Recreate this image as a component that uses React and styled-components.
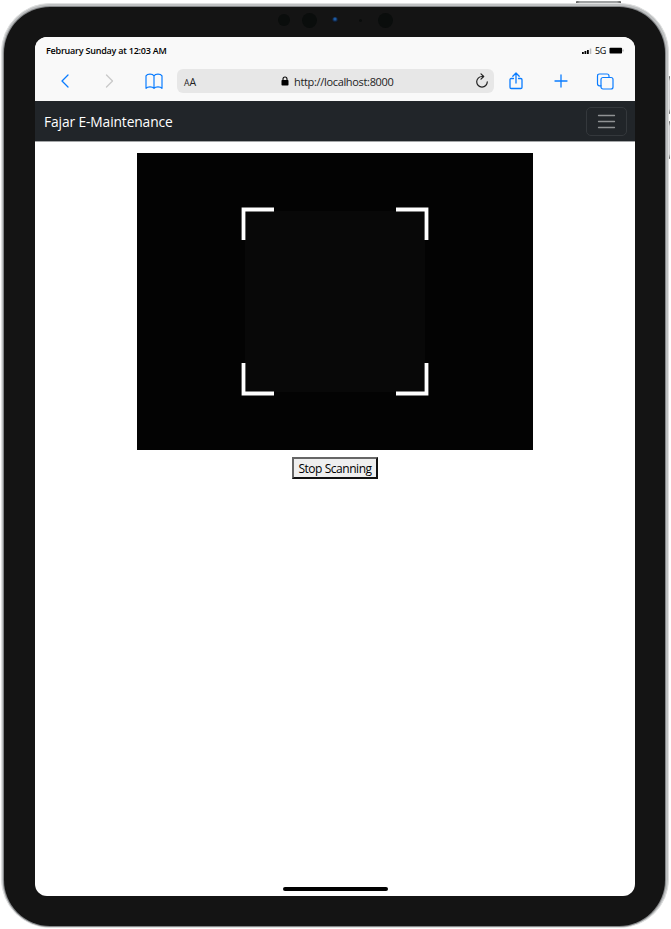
import React from "react";
import styled, { createGlobalStyle } from "styled-components";

const GlobalStyle = createGlobalStyle`
  * { box-sizing: border-box; }
  body { margin: 0; background: #fff; overflow: hidden; font-family: "Open Sans", "Noto Sans", sans-serif; }
`;

const Stage = styled.main`
  position: relative;
  width: 671px;
  height: 929px;
  padding: 3px 2px 1px 1px;
`;

const HardwareButton = styled.span`
  position: absolute;
  left: ${(p) => p.$x}px;
  top: ${(p) => p.$y}px;
  width: ${(p) => p.$w}px;
  height: ${(p) => p.$h}px;
  border-radius: 1px;
  background: ${(p) => (p.$side ? "linear-gradient(#555, #d0d0d2 5px, #d0d0d2 calc(100% - 5px), #555)" : "linear-gradient(90deg, #555, #a0a2a3 4px, #a0a2a3 calc(100% - 4px), #555)")};
`;

const Frame = styled.div`
  position: relative;
  height: 925px;
  padding: 3px 3px 1px 2px;
  border: 1px solid #dfe0e0;
  border-radius: 49px;
  background: #bfc1c2;
`;

const Bezel = styled.div`
  height: 100%;
  padding: 30px 30px 30px 31px;
  border-radius: 46px;
  background: #141414;
  box-shadow: 0 0 0 1px #858789;
`;

const Lens = styled.span`
  position: absolute;
  left: ${(p) => p.$x - p.$size / 2 - 2}px;
  top: ${(p) => 16 - p.$size / 2}px;
  width: ${(p) => p.$size}px;
  height: ${(p) => p.$size}px;
  border-radius: 50%;
  background: ${(p) => p.$color || "#0a0d0c"};
`;

const Screen = styled.div`
  height: 859px;
  display: flex;
  flex-direction: column;
  overflow: hidden;
  border-radius: 12px;
  background: #fff;
`;

const StatusBar = styled.div`
  height: 28px;
  padding: 0 11px;
  display: flex;
  align-items: center;
  justify-content: space-between;
  background: #f9f9f9;
  color: #000;
  font-size: 9px;
`;

const Clock = styled.span`
  margin-top: -1px;
  font-weight: 600;
  letter-spacing: -0.22px;
`;

const Signals = styled.div`
  display: flex;
  align-items: center;
  gap: 3px;
  margin-top: -1px;
  font-weight: 500;
  letter-spacing: -0.3px;
`;

const Toolbar = styled.div`
  height: 36px;
  padding: 4px 0 8px;
  display: grid;
  grid-template-columns: 15px 44px 45px 38px 317px 44px 45px 44px;
  align-items: center;
  background: #f9f9f9;
`;

const IconCell = styled.div`
  grid-column: ${(p) => p.$col};
  display: flex;
  justify-content: ${(p) => p.$align || "center"};
  svg { display: block; }
`;

const AddressBar = styled.div`
  grid-column: 5;
  height: 24px;
  padding: 0 4px 0 7px;
  display: grid;
  grid-template-columns: 97px 1fr 16px;
  align-items: center;
  border-radius: 6px;
  background: #e7e7e7;
  color: #222;
  svg { display: block; }
`;

const ReaderMode = styled.span`
  padding-top: 1px;
  font-size: 10.5px;
  small { font-size: 8.5px; }
`;

const Address = styled.span`
  display: flex;
  align-items: center;
  gap: 5px;
  font-size: 11px;
  letter-spacing: -0.33px;
`;

const Navbar = styled.nav`
  height: 41px;
  padding: 0 8px 0 9px;
  display: flex;
  align-items: center;
  justify-content: space-between;
  border: solid #a4a6a8;
  border-width: 0 0 1px;
  background: #212529;
`;

const Brand = styled.span`
  padding-top: 1px;
  color: #fff;
  font-size: 13.8px;
  font-weight: 500;
  letter-spacing: -0.12px;
`;

const Toggler = styled.button`
  width: 41px;
  height: 29px;
  padding: 0;
  display: grid;
  place-items: center;
  border: 1px solid #34383c;
  border-radius: 5px;
  background: transparent;
`;

const Content = styled.section`
  flex: 1;
  padding-top: 11px;
  display: flex;
  flex-direction: column;
  align-items: center;
`;

const Camera = styled.div`
  width: 396px;
  height: 297px;
  padding-top: 54px;
  display: flex;
  justify-content: center;
  background: #030303;
`;

const StopButton = styled.button`
  width: 86px;
  height: 22px;
  margin-top: 7px;
  padding: 1px 0 0;
  border: 2px solid;
  border-color: #666 #111 #111 #666;
  background: #efefef;
  color: #000;
  font-family: "Open Sans", sans-serif;
  font-size: 12px;
  line-height: 17px;
  letter-spacing: -0.46px;
  white-space: nowrap;
`;

const HomeIndicator = styled.div`
  width: 105px;
  height: 4px;
  margin: auto 0 5px;
  border-radius: 2px;
  background: #000;
`;

const Line = ({ w, h, children, color = "#0a7cff", sw = 1.3 }) => (
  <svg width={w} height={h} viewBox={`0 0 ${w} ${h}`} fill="none" stroke={color} strokeWidth={sw} strokeLinecap="round" strokeLinejoin="round">
    {children}
  </svg>
);

export default function App() {
  return (
    <Stage>
      <GlobalStyle />
      <HardwareButton $x={576} $y={1} $w={45} $h={3} />
      <HardwareButton $side $x={668} $y={76} $w={2} $h={38} />
      <HardwareButton $side $x={668} $y={121} $w={2} $h={38} />
      <Frame>
        <Bezel>
          <Screen>
            <StatusBar>
              <Clock>February Sunday at 12:03 AM</Clock>
              <Signals>
                <svg width="10" height="8" viewBox="0 0 10 8">
                  <path d="M0 5h1.800v2H0zM2.500 4h1.800v3H2.500zM5 3h1.800v4H5z" fill="#000" />
                  <path d="M7.800 1.500h1.500V7H7.800z" fill="#bbb" />
                </svg>
                <span>5G</span>
                <svg width="15" height="7" viewBox="0 0 15 7">
                  <rect x="0.500" y="0.800" width="12.500" height="5.700" rx="0.800" fill="#000" />
                  <path d="M14 2.500v2" stroke="#999" />
                </svg>
              </Signals>
            </StatusBar>
            <Toolbar>
              <IconCell $col={2} $align="flex-start">
                <Line w={30} h={14}><path d="M18 1L12 7l6 6" /></Line>
              </IconCell>
              <IconCell $col={3} $align="flex-start">
                <Line w={30} h={14} color="#c9c9c9"><path d="M12.500 1l6 6-6 6" /></Line>
              </IconCell>
              <IconCell $col={4} $align="flex-start">
                <Line w={30} h={18} sw={1.2}>
                  <path d="M7 3.800C8.500 1.500 13.500 1.500 15 3.800c1.500-2.300 6.500-2.300 8 0V16.300c-1.500-2-6.500-2-8 0-1.500-2-6.500-2-8 0zM15 3.800v12.500" />
                </Line>
              </IconCell>
              <AddressBar>
                <ReaderMode><small>A</small>A</ReaderMode>
                <Address>
                  <svg width="8" height="10" viewBox="0 0 8 10">
                    <rect x="0.500" y="4" width="7" height="5.500" rx="0.800" fill="#000" />
                    <path d="M2 4.500V3a2 2 0 0 1 4 0v1.500" fill="none" stroke="#000" strokeWidth="1.100" />
                  </svg>
                  http://localhost:8000
                </Address>
                <Line w={16} h={16} color="#222" sw={1.2}>
                  <path d="M9.500 3.500H8A5.300 5.300 0 1 0 13.300 8.800M7 .8l2.700 2.700L7 6.200" />
                </Line>
              </AddressBar>
              <IconCell $col={6}>
                <Line w={14} h={18}>
                  <path d="M4.500 6.500H2.200Q1 6.500 1 7.800v7.400q0 1.300 1.200 1.300h9.600q1.200 0 1.200-1.300V7.800q0-1.300-1.200-1.300H9.500M7 11V1M3.800 4.200L7 1l3.200 3.200" />
                </Line>
              </IconCell>
              <IconCell $col={7}>
                <Line w={14} h={14}><path d="M7 1v12M1 7h12" /></Line>
              </IconCell>
              <IconCell $col={8}>
                <Line w={18} h={17} sw={1.2}>
                  <rect x="5" y="4.500" width="12" height="11.500" rx="2" />
                  <path d="M5 12.800H3.500q-2 0-2-2V3q0-2 2-2H11q2 0 2 2v1.500" />
                </Line>
              </IconCell>
            </Toolbar>
            <Navbar>
              <Brand>Fajar E-Maintenance</Brand>
              <Toggler aria-label="Toggle navigation">
                <Line w={19} h={15} color="#909294"><path d="M1.500 1.500h16M1.500 7.500h16M1.500 13.500h16" /></Line>
              </Toggler>
            </Navbar>
            <Content>
              <Camera>
                <svg width="188" height="190" viewBox="0 0 188 190">
                  <rect x="4" y="4" width="180" height="181" fill="#080808" />
                  <path d="M2.500 33V2.500H33M155 2.500H185.500V33M185.500 156V186.500H155M33 186.500H2.500V156" fill="none" stroke="#fff" strokeWidth="3.800" />
                </svg>
              </Camera>
              <StopButton>Stop Scanning</StopButton>
              <HomeIndicator />
            </Content>
          </Screen>
        </Bezel>
        <Lens $x={284} $size={12} />
        <Lens $x={309.5} $size={15} />
        <Lens $x={335} $size={6} $color="radial-gradient(circle at 50% 35%, #1d5ba3 15%, #102039 50%, #111 75%)" />
        <Lens $x={360} $size={3} />
        <Lens $x={385.5} $size={15} />
      </Frame>
    </Stage>
  );
}
